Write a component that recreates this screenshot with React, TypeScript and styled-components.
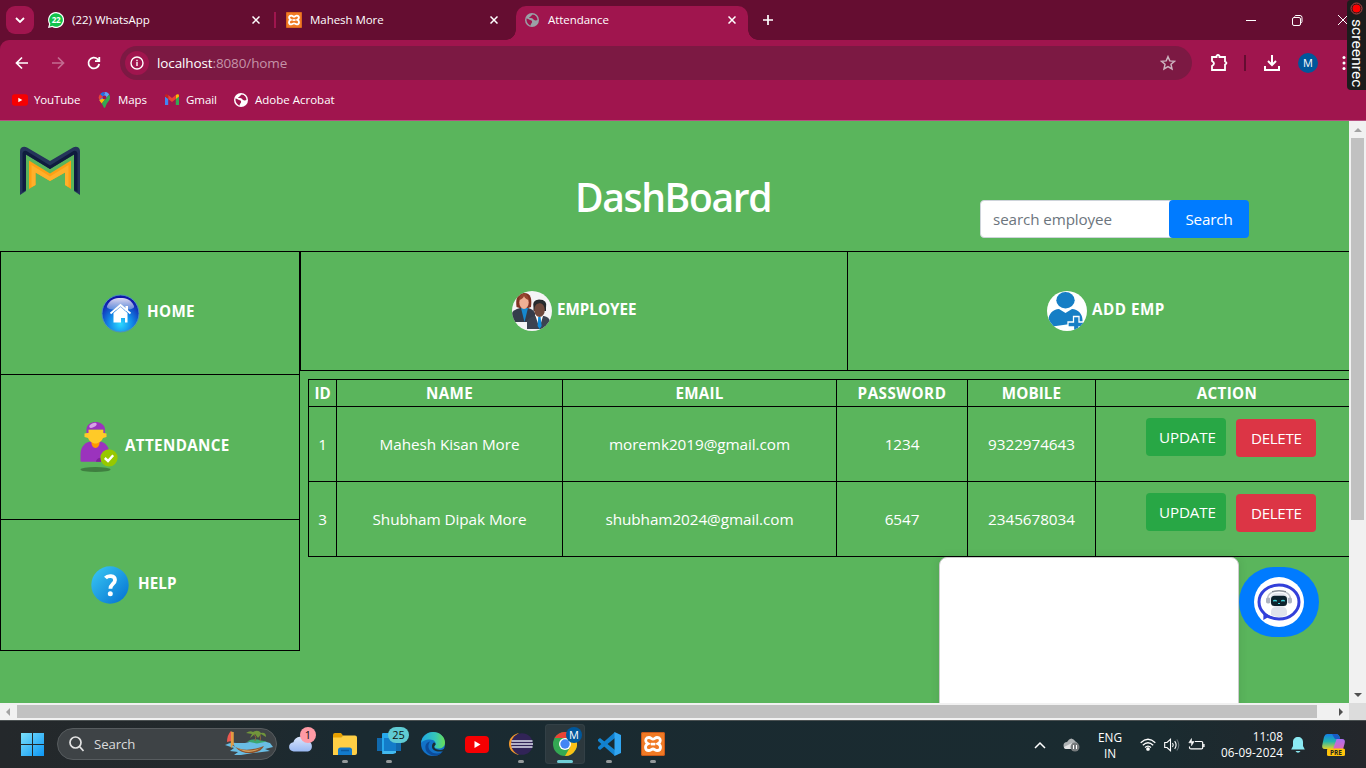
import React from "react";
import styled, { createGlobalStyle } from "styled-components";

const GlobalStyle = createGlobalStyle`
  * { box-sizing: border-box; }
  body { margin: 0; width: 1366px; height: 768px; overflow: hidden; font-family: "Open Sans", "Noto Sans", sans-serif; }
  svg { display: block; flex: none; }
`;

const Screen = styled.div`
  position: relative;
  width: 1366px;
  height: 768px;
  display: flex;
  flex-direction: column;
  overflow: hidden;
`;

/* ---------- browser chrome ---------- */

const TabStrip = styled.div`
  display: flex;
  height: 40px;
  background: #650d31;
  padding-left: 6px;
`;

const TabSearch = styled.div`
  width: 28px;
  height: 28px;
  margin-top: 6px;
  border-radius: 9px;
  background: #a0154e;
  display: flex;
  align-items: center;
  justify-content: center;
`;

const Tab = styled.div<{ $active?: boolean; $width: number; $inset: number; $gap: number; $end?: number }>`
  position: relative;
  display: flex;
  align-items: center;
  width: ${(p) => p.$width}px;
  height: 34px;
  margin-top: 6px;
  margin-left: ${(p) => (p.$active ? 2 : 0)}px;
  padding: 0 ${(p) => p.$end ?? 12}px 6px ${(p) => p.$inset}px;
  gap: ${(p) => p.$gap}px;
  border-radius: 10px 10px 0 0;
  background: ${(p) => (p.$active ? "#a0154e" : "transparent")};
`;

const TabCurve = styled.span<{ $side: "left" | "right" }>`
  position: absolute;
  bottom: 0;
  ${(p) => p.$side}: -10px;
  width: 10px;
  height: 10px;
  background: radial-gradient(circle at ${(p) => (p.$side === "left" ? "0 0" : "100% 0")}, transparent 9.5px, #a0154e 10px);
`;

const TabTitle = styled.span<{ $spacing: number }>`
  flex: 1;
  color: #fff;
  font-size: 11.5px;
  line-height: 16px;
  white-space: nowrap;
  letter-spacing: ${(p) => p.$spacing}px;
`;

const TabDivider = styled.div`
  width: 2px;
  height: 16px;
  margin-top: 12px;
  background: #a0154e;
`;

const WindowButtons = styled.div`
  display: flex;
  align-items: center;
  gap: 35px;
  margin-left: auto;
  padding-right: 18px;
`;

const Toolbar = styled.div`
  display: flex;
  align-items: center;
  height: 46px;
  padding-left: 14px;
  background: #a0154e;
  border-radius: 9px 0 0 0;
`;

const ToolbarBack = styled.div`
  background: #650d31;
`;

const NavButtons = styled.div`
  display: flex;
  gap: 20px;
  width: 106px;
`;

const AddressBar = styled.div`
  display: flex;
  align-items: center;
  width: 1072px;
  height: 34px;
  padding: 0 16px 0 5px;
  border-radius: 17px;
  background: #7c1943;
`;

const SiteInfo = styled.div`
  width: 24px;
  height: 24px;
  border-radius: 50%;
  background: #a0154e;
  display: flex;
  align-items: center;
  justify-content: center;
`;

const Url = styled.span`
  flex: 1;
  margin-left: 8px;
  font-size: 13.5px;
  line-height: 20px;
  letter-spacing: -0.12px;
  color: #c593a8;
`;

const UrlHost = styled.span`
  color: #fff;
`;

const ToolbarActions = styled.div`
  display: flex;
  align-items: center;
  margin-left: 17px;
`;

const ToolbarDivider = styled.div`
  width: 2px;
  height: 16px;
  margin: 0 17px 0 15px;
  background: #650d31;
`;

const Avatar = styled.div`
  width: 20px;
  height: 20px;
  margin: 0 23px 0 17px;
  border-radius: 50%;
  background: #00579b;
  color: #fff;
  font-size: 11px;
  line-height: 20px;
  text-align: center;
`;

const Bookmarks = styled.div`
  display: flex;
  height: 35px;
  padding: 5px 0 0 12px;
  background: #a0154e;
  border-bottom: 1px solid #b75081;
`;

const Bookmark = styled.div<{ $width: number; $spacing: number; $gap: number }>`
  display: flex;
  align-items: center;
  gap: ${(p) => p.$gap}px;
  width: ${(p) => p.$width}px;
  height: 17px;
  white-space: nowrap;
  color: #fff;
  font-size: 11.5px;
  line-height: 16px;
  letter-spacing: ${(p) => p.$spacing}px;
`;

const Recorder = styled.div`
  position: absolute;
  z-index: 2;
  top: 0;
  right: 0;
  width: 19px;
  height: 90px;
  padding-top: 2px;
  border-radius: 4px 0 0 4px;
  background: #1c1c1c;
  display: flex;
  flex-direction: column;
  align-items: center;
`;

const RecorderLabel = styled.span`
  writing-mode: vertical-rl;
  margin-top: 4px;
  width: 19px;
  line-height: 19px;
  color: #fff;
  font-family: Roboto, sans-serif;
  font-size: 15.5px;
  letter-spacing: 0.1px;
  white-space: nowrap;
`;

/* ---------- page ---------- */

const Viewport = styled.div`
  display: grid;
  grid-template-columns: 1349px 17px;
  grid-template-rows: 582px 17px;
`;

const Page = styled.div`
  position: relative;
  overflow: hidden;
  background: #5ab55c;
  color: #fff;
`;

const Header = styled.header`
  display: flex;
  height: 130px;
  padding: 25px 0 0 20px;
`;

const Title = styled.h1`
  width: 405px;
  margin: 23px 0 0 495px;
  font-size: 39px;
  line-height: 56px;
  font-weight: 600;
  letter-spacing: -1.35px;
`;

const SearchForm = styled.div`
  display: flex;
  margin-top: 54px;
  height: 38px;
`;

const SearchField = styled.div`
  width: 195px;
  margin-right: -6px;
  padding-left: 12px;
  border: 1px solid #ced4da;
  border-radius: 4px;
  background: #fff;
  color: #6c757d;
  font-size: 15.2px;
  line-height: 36px;
  letter-spacing: -0.1px;
`;

const PrimaryButton = styled.button`
  width: 80px;
  height: 38px;
  padding: 0;
  border: 0;
  border-radius: 4px;
  background: #007bff;
  color: #fff;
  font-family: inherit;
  font-size: 15.2px;
  line-height: 38px;
  letter-spacing: -0.15px;
  text-align: center;
`;

const Body = styled.div`
  display: grid;
  grid-template-columns: 300px 1066px;
  align-items: start;
`;

const Sidebar = styled.nav`
  border: 1px solid #000;
  border-bottom: 0;
`;

const SideItem = styled.div<{ $height: number; $inset: number; $gap: number }>`
  display: flex;
  align-items: center;
  gap: ${(p) => p.$gap}px;
  height: ${(p) => p.$height}px;
  padding-left: ${(p) => p.$inset}px;
  border-bottom: 1px solid #000;
`;

const NavLabel = styled.span<{ $spacing: number }>`
  padding-bottom: 4px;
  font-size: 15.2px;
  line-height: 20px;
  font-weight: 700;
  white-space: nowrap;
  letter-spacing: ${(p) => p.$spacing}px;
`;

const TopNav = styled.nav`
  display: grid;
  grid-template-columns: 547px 518px;
  height: 120px;
  border: 1px solid #000;
  border-right: 0;
`;

const TopItem = styled.div<{ $inset: number }>`
  display: flex;
  align-items: center;
  gap: 5px;
  padding-left: ${(p) => p.$inset}px;
  border-right: 1px solid #000;
`;

const Table = styled.div`
  width: 1051px;
  margin: 8px 0 0 8px;
  border-top: 1px solid #000;
  border-left: 1px solid #000;
`;

const Row = styled.div<{ $height: number }>`
  display: grid;
  grid-template-columns: 28px 226px 274px 131px 128px 263px;
  grid-template-rows: ${(p) => p.$height}px;
`;

const HeadCell = styled.div<{ $spacing: number }>`
  border-right: 1px solid #000;
  border-bottom: 1px solid #000;
  font-size: 15.2px;
  font-weight: 700;
  line-height: 27px;
  text-align: center;
  letter-spacing: ${(p) => p.$spacing}px;
`;

const Cell = styled.div`
  border-right: 1px solid #000;
  border-bottom: 1px solid #000;
  font-size: 15.3px;
  line-height: 75px;
  text-align: center;
  letter-spacing: -0.07px;
`;

const ActionCell = styled.div`
  display: flex;
  gap: 10px;
  padding: 11px 0 0 50px;
  border-right: 1px solid #000;
  border-bottom: 1px solid #000;
`;

const ActionButton = styled.button<{ $danger?: boolean }>`
  width: 80px;
  height: 38px;
  margin-top: ${(p) => (p.$danger ? 1 : 0)}px;
  padding: 0 0 0 ${(p) => (p.$danger ? 15 : 13)}px;
  border: 0;
  border-radius: 4px;
  background: ${(p) => (p.$danger ? "#dc3545" : "#28a745")};
  color: #fff;
  font-family: inherit;
  font-size: 15.2px;
  line-height: 38px;
  text-align: left;
  letter-spacing: ${(p) => (p.$danger ? -0.35 : -0.15)}px;
`;

const ChatPanel = styled.div`
  position: absolute;
  left: 939px;
  top: 436px;
  width: 300px;
  height: 400px;
  border: 1px solid #ccc;
  border-radius: 8px;
  background: #fff;
  box-shadow: 0 0 10px rgba(0, 0, 0, 0.1);
`;

const ChatButton = styled.div`
  position: absolute;
  left: 1239px;
  top: 446px;
  width: 80px;
  height: 70px;
  border-radius: 35px;
  background: #007bff;
  display: flex;
  align-items: center;
  justify-content: center;
`;

const VScroll = styled.div`
  display: flex;
  flex-direction: column;
  align-items: center;
  background: #f1f1f1;
  padding: 7px 0 6px;
`;

const VThumb = styled.div`
  width: 13px;
  height: 382px;
  margin: 6px 0 auto;
  background: #c1c1c1;
`;

const HScroll = styled.div`
  display: flex;
  align-items: center;
  background: #f1f1f1;
  padding: 0 6px 0 6px;
`;

const HThumb = styled.div`
  width: 1300px;
  height: 13px;
  margin: 0 auto 0 7px;
  background: #c1c1c1;
`;

const ScrollCorner = styled.div`
  background: #dcdcdc;
`;

/* ---------- taskbar ---------- */

const Taskbar = styled.footer`
  display: flex;
  height: 48px;
  padding-left: 21px;
  border-top: 1px solid #4b5152;
  background: linear-gradient(90deg, #24282b 0%, #22292c 14%, #1a2a31 26%, #1a2b30 85%, #20282d 94%, #24272c 100%);
  color: #fff;
`;

const TaskSearch = styled.div`
  display: flex;
  align-items: center;
  width: 220px;
  height: 32px;
  margin: 7px 2px 0 13px;
  padding: 0 3px 0 11px;
  border: 1px solid #575c5f;
  border-radius: 16px;
  background: #3e4346;
`;

const TaskSearchText = styled.span`
  flex: 1;
  margin-left: 10px;
  color: #dadbdc;
  font-size: 13.2px;
  letter-spacing: -0.1px;
`;

const StartButton = styled.div`
  margin-top: 12px;
`;

const TaskApp = styled.div<{ $active?: boolean }>`
  position: relative;
  width: 40px;
  height: 40px;
  margin: 3px 2px 0;
  border-radius: 4px;
  background: ${(p) => (p.$active ? "#2c383d" : "transparent")};
  box-shadow: ${(p) => (p.$active ? "inset 0 0 0 1px #334046" : "none")};
  display: flex;
  align-items: center;
  justify-content: center;
`;

const Running = styled.span<{ $focused?: boolean }>`
  position: absolute;
  bottom: 1px;
  left: ${(p) => (p.$focused ? 12 : 17)}px;
  width: ${(p) => (p.$focused ? 16 : 6)}px;
  height: 3px;
  border-radius: 2px;
  background: ${(p) => (p.$focused ? "#70cfd8" : "#94999b")};
`;

const Badge = styled.span<{ $left: number; $top: number; $width: number; $fill: string; $ink?: string }>`
  position: absolute;
  left: ${(p) => p.$left}px;
  top: ${(p) => p.$top}px;
  width: ${(p) => p.$width}px;
  height: 16px;
  border-radius: 8px;
  background: ${(p) => p.$fill};
  color: ${(p) => p.$ink ?? "#111"};
  font-size: 11px;
  line-height: 16px;
  text-align: center;
`;

const Tray = styled.div`
  display: flex;
  align-items: center;
  margin-left: auto;
  padding-right: 19px;
`;

const Language = styled.div`
  width: 30px;
  margin: 0 15px 0 15px;
  font-size: 11.8px;
  line-height: 16px;
  text-align: center;
  letter-spacing: -0.05px;
`;

const Clock = styled.div`
  width: 72px;
  margin: -2px 8px 0 6px;
  font-size: 11.7px;
  line-height: 16px;
  text-align: right;
  white-space: nowrap;
  letter-spacing: 0.1px;
`;

/* ---------- icons ---------- */

const CloseIcon = () => (
  <svg width="8" height="8" viewBox="0 0 8 8" stroke="#fff" strokeWidth="1.5"><path d="M.5 .5l7 7M7.5 .5l-7 7" /></svg>
);

const WhatsAppIcon = () => (
  <svg width="16" height="16" viewBox="0 0 16 16">
    <path d="M8 0a8 8 0 1 1-3.8 15L0 16l1.100-4A8 8 0 0 1 8 0z" fill="#fff" />
    <path d="M8 1.200a6.800 6.800 0 1 1-3.500 12.600l-2.900.8.800-2.800A6.800 6.800 0 0 1 8 1.200z" fill="#12c24b" />
    <text x="8" y="10.900" fontSize="8" fontWeight="700" fill="#fff" textAnchor="middle" letterSpacing="-.4">22</text>
  </svg>
);

const XamppIcon = ({ size }: { size: number }) => (
  <svg width={size} height={size} viewBox="0 0 24 24">
    <rect width="24" height="24" rx="2" fill="#f17a24" />
    <rect x=".5" y=".5" width="23" height="23" rx="1.500" fill="none" stroke="#c9591b" />
    <path d="M8 5.500c-3 0-3.800 2.300-3 4.200.4 1 1.200 1.500 2 2-1.500.6-2.500 1.800-2.500 3.500 0 2.200 1.500 3.300 3.300 3.300 1.900 0 2.700-1.500 4.200-1.500s2.300 1.500 4.200 1.500c1.800 0 3.300-1.100 3.300-3.300 0-1.700-1-2.900-2.500-3.500.8-.5 1.600-1 2-2 .8-1.900 0-4.200-3-4.200-1.800 0-2.500 1.700-4 1.700s-2.200-1.700-4-1.700z" fill="none" stroke="#fff" strokeWidth="2.800" />
    <path d="M9.800 12.100h4.400" stroke="#fff" strokeWidth="2.600" />
  </svg>
);

const GlobeIcon = ({ size, fill, land }: { size: number; fill: string; land: string }) => (
  <svg width={size} height={size} viewBox="0 0 14 14">
    <circle cx="7" cy="7" r="7" fill={fill} />
    <path d="M1.500 5.500c1.500.2 3 1.500 3.600 1.600 1 .1 2 .7 2 1.900 0 1.500-1.500 1.300-1.500 3.500-2.600-.7-4.400-3.600-4.100-7zM7.600 1.500c-.4 1-1.500.8-1.800 1.700-.4 1.100-2 .8-1.700 1.900 1.600 0 3.400-.2 4 1 .5 1.200 2.500 1.600 4.300 1C12.600 4.200 10.500 1.800 7.600 1.500z" fill={land} />
  </svg>
);

const YouTubeIcon = ({ width, height }: { width: number; height: number }) => (
  <svg width={width} height={height} viewBox="0 0 24 17">
    <rect width="24" height="17" rx="4" fill="#f60002" />
    <path d="M9.500 5l6 3.500-6 3.500z" fill="#fff" />
  </svg>
);

const MapsIcon = () => (
  <svg width="13" height="16" viewBox="0 0 13 16">
    <path d="M6.500 0a5.800 5.800 0 0 1 4.600 2.300L4.800 9.700 3 9.800 1.300 8 7 1z" fill="#4285f4" />
    <path d="M6.500 0A5.800 5.800 0 0 0 2 2.200L5 5z" fill="#1a73e8" />
    <path d="M1.300 8C2 9.500 3 10.500 3.800 11.600L9 5z" fill="#fbbc04" />
    <path d="M2 2.200A5.600 5.600 0 0 0 1.300 8L5 4.700z" fill="#ea4335" />
    <path d="M11.100 2.300C13.600 6.500 10.600 9 9 11.300 7.900 13 7.500 16 6.500 16S5 13.300 3.800 11.600z" fill="#34a853" />
    <path d="M6.500 0a5.800 5.800 0 0 1 4.600 2.300L8 6z" fill="#5fa0f5" />
    <circle cx="6.500" cy="5.600" r="2" fill="#a0154e" />
  </svg>
);

const GmailIcon = () => (
  <svg width="14" height="11" viewBox="0 0 14 11">
    <path d="M0 2.500V11h3.200V4.500z" fill="#4285f4" />
    <path d="M14 2.500V11h-3.200V4.500z" fill="#34a853" />
    <path d="M10.800 1v4L14 2.600V1.500C14 0 12.200-.4 10.800 1z" fill="#fbbc04" />
    <path d="M3.200 1L7 3.900 10.800 1v4L7 7.900 3.200 5z" fill="#ea4335" />
    <path d="M0 2.600L3.200 5V1C1.800-.4 0 0 0 1.500z" fill="#c5221f" />
  </svg>
);

const LogoM = () => (
  <svg width="60" height="49" viewBox="0 0 60 49">
    <path d="M0 49V5C0 1 4 0 7 1.500L30 15 53 1.500C56 0 60 1 60 5v44l-6-4V8.500L30 23 6 8.500V45z" fill="#24355a" />
    <path d="M2.500 46V7q1-3 4-2L30 19.500 53.500 5q3-1 4 2v39L54 44V8.500L30 23 6 8.500V44z" fill="#0f1c3e" />
    <path d="M9 14.500l21 13 21-13V43l-6-4V26.500L30 35 15.500 26.500V39L9 43z" fill="#ff9f14" />
    <path d="M11.500 19L30 30.500 48.500 19v22L45 39V26.500L30 35 15.500 26.500V39l-4 2z" fill="#ffb02b" />
  </svg>
);

const HomeBall = () => (
  <svg width="39" height="39" viewBox="0 0 39 39">
    <defs>
      <radialGradient id="ball" cx="50%" cy="78%" r="70%">
        <stop offset="0" stopColor="#2cd9ff" /><stop offset=".45" stopColor="#1188e8" /><stop offset="1" stopColor="#1016a8" />
      </radialGradient>
      <linearGradient id="gloss" x1="0" y1="0" x2="0" y2="1">
        <stop offset="0" stopColor="#fff" stopOpacity=".85" /><stop offset="1" stopColor="#fff" stopOpacity=".3" />
      </linearGradient>
    </defs>
    <circle cx="19.500" cy="19.500" r="18.500" fill="url(#ball)" stroke="#4c93bc" />
    <path d="M6 12C9 5.500 14 4 19.500 4S30 5.500 33 12c1 3-5 4-13.500 4S5 15 6 12z" fill="url(#gloss)" />
    <path d="M9.500 19.500l10-8.500 10 8.500" fill="none" stroke="#fff" strokeWidth="1.800" />
    <path d="M24.500 12h2.500v5h-2.500zM12.500 19l7-6 7 6v9.500H24V24h-4v4.500h-7.500z" fill="#fff" />
  </svg>
);

const PersonCheck = () => (
  <svg width="38" height="52" viewBox="0 0 38 52">
    <ellipse cx="15.500" cy="48.500" rx="15" ry="2.500" fill="#3f7f40" />
    <path d="M.5 40V33c0-8 6-12.500 11-12.500h8c5 0 10 5 10 12.500v7q0 .8-1 .8h-27q-1 0-1-.8z" fill="#9b33bd" />
    <path d="M16 40.800c0-2 2-4 5-4v4z" fill="#7d2299" />
    <path d="M11.500 16h8v6c0 2-1.500 5-4 5s-4-3-4-5z" fill="#ff9900" />
    <path d="M7.500 8.500h16v3.500l3 .5v3.500l-3.500 1c-1 3-4.500 5.500-7.500 5.500s-6.500-2.500-7.500-5.500l-3.500-1v-3.500l3-.5z" fill="#ffca28" />
    <path d="M6.500 12V8.500C6.500 3.500 11 1 15.500 1s9.500 2.500 9.500 7.500V12h-1.500V8.500h-15V12z" fill="#9b33bd" />
    <ellipse cx="13" cy="4.300" rx="4" ry="1.900" fill="#d6a3e5" transform="rotate(-28 13 4.300)" />
    <circle cx="29" cy="36.800" r="8.600" fill="#97c800" />
    <path d="M24.800 37l3.200 3 5.200-5.800" fill="none" stroke="#fff" strokeWidth="2.400" />
  </svg>
);

const HelpBall = () => (
  <svg width="38" height="38" viewBox="0 0 38 38">
    <defs>
      <linearGradient id="help" x1="0" y1="0" x2="1" y2="1">
        <stop offset="0.100" stopColor="#35c1f1" /><stop offset=".9" stopColor="#0878d4" />
      </linearGradient>
    </defs>
    <circle cx="19" cy="19" r="18.700" fill="url(#help)" />
    <path d="M14.500 12c2-2.500 9.500-3 9.500 2 0 4-4.600 4-4.600 8.800" fill="none" stroke="#fff" strokeWidth="3.800" />
    <circle cx="19.300" cy="27.800" r="2.500" fill="#fff" />
  </svg>
);

const EmployeesIcon = () => (
  <svg width="40" height="40" viewBox="0 0 40 40">
    <defs><clipPath id="disc"><circle cx="20" cy="20" r="20" /></clipPath></defs>
    <g clipPath="url(#disc)">
      <rect width="40" height="40" fill="#f5f4f6" />
      <path d="M4.500 16C3.500 8 5 2 12 2s8 6 7 14q-7 3-14.500 0z" fill="#803222" />
      <path d="M0 31V22q1-3 8-5h8q5 1 7 5v9z" fill="#343c4b" />
      <path d="M9 17h7l-3.500 14z" fill="#1688cf" />
      <ellipse cx="12" cy="11.500" rx="4.700" ry="6.500" fill="#f0b095" />
      <path d="M7 9q4-1 5-4 1 3 5 4-1-6-5-6.500T7 9z" fill="#96452f" />
      <path d="M15 38V30q1-3 8-5h9q5 1 6 5v8z" fill="#3b4351" />
      <path d="M23.500 25h7.500L27.500 37z" fill="#fff" /><path d="M26.200 26h2.400l1 9-2 3-2-3z" fill="#118ddb" />
      <path d="M21.500 17q-2-8 5.500-8.500 9 0 7 8.500v3H21.500z" fill="#25282b" />
      <ellipse cx="27.500" cy="19" rx="5.300" ry="7" fill="#70493d" />
      <path d="M22 14q7-4 11 0l-1-4h-9z" fill="#292c2f" />
    </g>
  </svg>
);

const AddEmployeeIcon = () => (
  <svg width="40" height="40" viewBox="0 0 40 40">
    <defs><clipPath id="disc2"><circle cx="20" cy="20" r="20" /></clipPath></defs>
    <g clipPath="url(#disc2)">
      <rect width="40" height="40" fill="#fff" />
      <ellipse cx="18.500" cy="9.300" rx="9.200" ry="8.200" fill="#167ec5" />
      <path d="M1.500 34v-5c0-6 4.500-11 10.500-11l6.500 4 6.500-4c6 0 10.500 5 10.500 11v4q-14-.5-26.500 2-5 .5-7.500-1z" fill="#167ec5" />
      <path d="M26.500 25.500h5.500v5.500h5.500v5h-5.500v5h-5.500v-5H21v-5h5.500z" fill="#167ec5" stroke="#fff" strokeWidth="1.300" />
    </g>
  </svg>
);

const BotIcon = () => (
  <svg width="50" height="50" viewBox="0 0 50 50">
    <circle cx="25" cy="25" r="25" fill="#fff" />
    <ellipse cx="25" cy="25" rx="20" ry="17" fill="none" stroke="#3340da" strokeWidth="3" />
    <path d="M9.500 35.500l-.2 7.500 7-4z" fill="#3340da" />
    <path d="M13.500 22c0-11 23-11 23 0" fill="none" stroke="#c0c4cc" strokeWidth="1.400" />
    <path d="M18 14.500q7-1.500 14 0" fill="none" stroke="#7d828a" strokeWidth="1" />
    <rect x="12" y="20.500" width="4.500" height="6" rx="1.800" fill="#aeb4c0" /><rect x="33.500" y="20.500" width="4.500" height="6" rx="1.800" fill="#aeb4c0" />
    <rect x="16" y="16" width="18" height="14" rx="6" fill="#e6e8ef" />
    <rect x="17" y="18.700" width="16" height="10.200" rx="3.500" fill="#0d222c" />
    <path d="M19 24q2-2 4 0zM27 24q2-2 4 0z" fill="#46dee4" stroke="#46dee4" strokeWidth=".6" />
    <path d="M24 26.500h2" stroke="#46dee4" />
    <path d="M17 38v-3q0-5 5-5h6q5 0 5 5v3q-8 4-16 0z" fill="#dfe2eb" />
  </svg>
);

const BoatIcon = () => (
  <svg width="48" height="28" viewBox="0 0 48 28">
    <path d="M0 15q6-3 11-2l9 0q15-4 25 0l3 4-8 2 5 2-17 2-12 2H9l4-3-8-1 4-3z" fill="#69bde4" />
    <path d="M22 11.500q7-4 14-1l6 1-10 2z" fill="#3ba66f" />
    <path d="M30 11q2-4-1-7M35 11q1-3 0-6" stroke="#8d633c" fill="none" />
    <path d="M21 3q4-3 7-1 5-3 8 1 5-1 5 4l-5-3-3 4-3-4-5 4 2-4z" fill="#71953b" />
    <path d="M7 4v11q12 9 32 1-4 8-18 7-9-2-13-9z" fill="#8c512b" />
    <path d="M10 17q15 7 27 0-9 7-19 4z" fill="#d0a05e" />
    <path d="M6.500 1.500v16M8 2v13" stroke="#e39b42" strokeWidth="1.500" />
    <path d="M6 1Q2 5 2 12l4-1z" fill="#ec5850" />
  </svg>
);

const WeatherIcon = () => (
  <svg width="26" height="22" viewBox="0 0 26 22">
    <defs><linearGradient id="cloud" x1="0" y1="0" x2="0" y2="1"><stop offset="0" stopColor="#dbe7fd" /><stop offset="1" stopColor="#99b8f2" /></linearGradient></defs>
    <path d="M6 18.500a4.600 4.600 0 0 1-.6-9.200A7.500 7.500 0 0 1 19.500 8 5.400 5.400 0 0 1 20 18.500z" fill="url(#cloud)" />
  </svg>
);

const FolderIcon = () => (
  <svg width="24" height="22" viewBox="0 0 24 22">
    <path d="M0 2q0-2 2-2h6l2 2.500L8 5H0z" fill="#e7a000" /><path d="M0 4.500h8l2-2h12q2 0 2 2V20q0 2-2 2H0z" fill="#ffcf45" />
    <path d="M5 22v-5q0-2.500 2.500-2.500h9q2.500 0 2.500 2.500v5z" fill="#127acb" /><path d="M8 17.500h8" stroke="#0c5a9e" strokeWidth="1.500" />
  </svg>
);

const PhoneLinkIcon = () => (
  <svg width="26" height="24" viewBox="0 0 26 24">
    <rect x="1" y="6" width="24" height="13" fill="#1069ad" /><rect x="6" y="1" width="11" height="20" rx="1" fill="#27a9ec" />
    <rect x="8" y="6" width="12" height="13" fill="#137cc9" /><path d="M7 19h13v2l-3 1H6z" fill="#42b9ef" />
  </svg>
);

const EdgeIcon = () => (
  <svg width="24" height="24" viewBox="0 0 24 24">
    <defs><linearGradient id="edge" x1="0" y1="0" x2="1" y2="0"><stop offset="0" stopColor="#1fa7e4" /><stop offset=".6" stopColor="#36c7b8" /><stop offset="1" stopColor="#69df54" /></linearGradient></defs>
    <circle cx="12" cy="12" r="12" fill="#1272c8" />
    <path d="M0 11C1 4 6 0 12 0c7 0 12 5 12 10.500 0 4-3 6-6.500 6-3 0-5-1-3.500-3 2-3-1-6-5-6-5 0-8 2-9 3.500z" fill="url(#edge)" />
    <path d="M9 9.500c-4 6 0 12 7 12 3 0 5-1 6.500-3-4 7-13 6.500-17 1C3 15 5 10 9 9.500z" fill="#0c4b9a" />
    <path d="M13.800 13.500c-2 2 1 4.500 4.500 4.500 2.300 0 4-.4 6-2l-1.500 3C17 20.500 11 19 11 14.500c0-2 .8-3.500 2-4 2 .8 2 2 .8 3z" fill="#1b2c33" />
  </svg>
);

const EclipseIcon = () => (
  <svg width="24" height="24" viewBox="0 0 24 24">
    <path d="M10 1C3 3 0 7 0 12s3 9 10 11C6 20 4 17 4 12s2-8 6-11z" fill="#f59a2c" />
    <circle cx="13" cy="12" r="10.800" fill="#312457" />
    <path d="M2.500 9h21M2 12h22M2.500 15h21" stroke="#dedfee" strokeWidth="1.600" />
  </svg>
);

const ChromeIcon = () => (
  <svg width="24" height="24" viewBox="0 0 24 24">
    <circle cx="12" cy="12" r="12" fill="#34a853" />
    <path d="M12 12L1.600 6A12 12 0 0 1 22.400 6H12z" fill="#ea4335" />
    <path d="M22.400 6A12 12 0 0 1 12 24l5.200-9L12 6z" fill="#fbc116" />
    <path d="M1.600 6l5.200 9 5.200-9z" fill="#34a853" />
    <circle cx="12" cy="12" r="6" fill="#fff" /><circle cx="12" cy="12" r="4.700" fill="#4285f4" />
  </svg>
);

const VsCodeIcon = () => (
  <svg width="24" height="24" viewBox="0 0 24 24">
    <path d="M1 7.500l2-1.500L18 18v6L1 9z" fill="#1485d2" /><path d="M1 16.500L3 18 18 6V0L1 15z" fill="#1180cf" />
    <path d="M17.500 0L24 3v18l-6.500 3z" fill="#31a6f2" />
  </svg>
);

const CopilotIcon = () => (
  <svg width="26" height="24" viewBox="0 0 26 24">
    <defs>
      <linearGradient id="cpA" x1="0" y1="0" x2="0" y2="1"><stop offset="0" stopColor="#147ee5" /><stop offset=".5" stopColor="#23b5ad" /><stop offset="1" stopColor="#dfd32b" /></linearGradient>
      <linearGradient id="cpB" x1="0" y1="0" x2="0" y2="1"><stop offset="0" stopColor="#a96ff2" /><stop offset="1" stopColor="#f8649c" /></linearGradient>
    </defs>
    <path d="M14 6h7q4 0 2.500 5l-2 7q-1 3-5 3H9z" fill="url(#cpB)" />
    <path d="M6 1h9q3 0 4 4h-3l-4 11H4Q0 16 1.500 11L3 4q1-3 3-3z" fill="url(#cpA)" />
    <path d="M11 1h4q3 0 4 5h-5z" fill="#195bc6" />
    <rect x="6" y="15.500" width="18" height="7.500" rx="1.500" fill="#ffc40c" />
    <text x="15" y="21.700" fontSize="6.500" fontWeight="700" fill="#222" textAnchor="middle">PRE</text>
  </svg>
);

const columns = [
  { label: "ID", spacing: -0.1 },
  { label: "NAME", spacing: 0.35 },
  { label: "EMAIL", spacing: 0.2 },
  { label: "PASSWORD", spacing: 0.5 },
  { label: "MOBILE", spacing: 0.1 },
  { label: "ACTION", spacing: 0.35 },
];

const employees = [
  { id: 1, name: "Mahesh Kisan More", email: "moremk2019@gmail.com", password: "1234", mobile: "9322974643" },
  { id: 3, name: "Shubham Dipak More", email: "shubham2024@gmail.com", password: "6547", mobile: "2345678034" },
];

function BrowserChrome() {
  return (
    <>
      <TabStrip>
        <TabSearch>
          <svg width="10" height="6" viewBox="0 0 10 6" fill="none" stroke="#fff" strokeWidth="1.800"><path d="M1 1l4 4 4-4" /></svg>
        </TabSearch>
        <Tab $width={240} $inset={14} $gap={8} $end={14}><WhatsAppIcon /><TabTitle $spacing={0}>(22) WhatsApp</TabTitle><CloseIcon /></Tab>
        <TabDivider />
        <Tab $width={238} $inset={10} $gap={8} $end={16}><XamppIcon size={16} /><TabTitle $spacing={-0.05}>Mahesh More</TabTitle><CloseIcon /></Tab>
        <Tab $active $width={232} $inset={9} $gap={9}>
          <TabCurve $side="left" /><GlobeIcon size={14} fill="#9aa0a6" land="#a0154e" /><TabTitle $spacing={-0.05}>Attendance</TabTitle><CloseIcon /><TabCurve $side="right" />
        </Tab>
        <svg width="40" height="40" viewBox="0 0 40 40" stroke="#fff" strokeWidth="1.700"><path d="M15 20h10M20 15v10" /></svg>
        <WindowButtons>
          <svg width="10" height="10" viewBox="0 0 10 10" stroke="#fff"><path d="M0 5.500h10" /></svg>
          <svg width="12" height="11" viewBox="0 0 12 11" fill="none" stroke="#fff"><rect x="1.500" y="2.500" width="8" height="8" rx="1.500" /><path d="M3.500 1.500Q4 .5 5 .5h4q2 0 2 2v4q0 1-1 1.500" /></svg>
          <svg width="10" height="10" viewBox="0 0 10 10" stroke="#fff"><path d="M0 0l10 10M10 0L0 10" /></svg>
        </WindowButtons>
      </TabStrip>
      <ToolbarBack>
        <Toolbar>
          <NavButtons>
            <svg width="16" height="16" viewBox="0 0 16 16" fill="none" stroke="#fff" strokeWidth="1.700"><path d="M14 8H3M8 2.500L2.500 8 8 13.500" /></svg>
            <svg width="16" height="16" viewBox="0 0 16 16" fill="none" stroke="#c36c91" strokeWidth="1.700"><path d="M2 8h11M8 2.500L13.500 8 8 13.500" /></svg>
            <svg width="16" height="16" viewBox="0 0 16 16" fill="none" stroke="#fff" strokeWidth="1.800"><path d="M13.200 9A5.400 5.400 0 1 1 11.600 4.100L13 5.500M13.300 2v4.200H9" /></svg>
          </NavButtons>
          <AddressBar>
            <SiteInfo><svg width="14" height="14" viewBox="0 0 14 14" fill="none" stroke="#fff" strokeWidth="1.400"><circle cx="7" cy="7" r="6" /><path d="M7 6v4M7 3.700v1.500" /></svg></SiteInfo>
            <Url><UrlHost>localhost</UrlHost>:8080/home</Url>
            <svg width="16" height="16" viewBox="0 0 16 16" fill="none" stroke="#ccb4bf" strokeWidth="1.500"><path d="M8 1.700l1.800 4.200 4.700.4-3.500 3 1 4.600L8 11.500l-4 2.400 1-4.600-3.500-3 4.700-.4z" /></svg>
          </AddressBar>
          <ToolbarActions>
            <svg width="20" height="20" viewBox="0 0 20 20" fill="none" stroke="#fff" strokeWidth="1.800"><path d="M3 4h4.500V3q1.500-2 3 0v1H16v4.500q3 1.500 0 3V17H3v-4q4-2.500 0-5z" /></svg>
            <ToolbarDivider />
            <svg width="18" height="18" viewBox="0 0 18 18" fill="none" stroke="#fff" strokeWidth="2"><path d="M9 1v10M5 7l4 4 4-4M2 12v4h14v-4" /></svg>
            <Avatar>M</Avatar>
            <svg width="6" height="16" viewBox="0 0 6 16" fill="#fff"><circle cx="3" cy="2.500" r="1.500" /><circle cx="3" cy="8" r="1.500" /><circle cx="3" cy="13.500" r="1.500" /></svg>
          </ToolbarActions>
        </Toolbar>
      </ToolbarBack>
      <Bookmarks>
        <Bookmark $width={86} $spacing={-0.15} $gap={6}><YouTubeIcon width={16} height={12} />YouTube</Bookmark>
        <Bookmark $width={67} $spacing={-0.1} $gap={7}><MapsIcon />Maps</Bookmark>
        <Bookmark $width={69} $spacing={-0.05} $gap={7}><GmailIcon />Gmail</Bookmark>
        <Bookmark $width={110} $spacing={0} $gap={7}><GlobeIcon size={14} fill="#fff" land="#a0154e" />Adobe Acrobat</Bookmark>
      </Bookmarks>
      <Recorder>
        <svg width="13" height="13" viewBox="0 0 13 13"><circle cx="6.500" cy="6.500" r="5.500" fill="none" stroke="#b44" /><circle cx="6.500" cy="6.500" r="4" fill="#f00" /></svg>
        <RecorderLabel>screenrec</RecorderLabel>
      </Recorder>
    </>
  );
}

function Dashboard() {
  return (
    <Page>
      <Header>
        <LogoM />
        <Title>DashBoard</Title>
        <SearchForm><SearchField>search employee</SearchField><PrimaryButton>Search</PrimaryButton></SearchForm>
      </Header>
      <Body>
        <Sidebar>
          <SideItem $height={123} $inset={100} $gap={7}><HomeBall /><NavLabel $spacing={0.35}>HOME</NavLabel></SideItem>
          <SideItem $height={145} $inset={79} $gap={7}><PersonCheck /><NavLabel $spacing={0.35}>ATTENDANCE</NavLabel></SideItem>
          <SideItem $height={131} $inset={90} $gap={9}><HelpBall /><NavLabel $spacing={0.1}>HELP</NavLabel></SideItem>
        </Sidebar>
        <main>
          <TopNav>
            <TopItem $inset={211}><EmployeesIcon /><NavLabel $spacing={0}>EMPLOYEE</NavLabel></TopItem>
            <TopItem $inset={199}><AddEmployeeIcon /><NavLabel $spacing={0.5}>ADD EMP</NavLabel></TopItem>
          </TopNav>
          <Table>
            <Row $height={27}>
              {columns.map((c) => <HeadCell key={c.label} $spacing={c.spacing}>{c.label}</HeadCell>)}
            </Row>
            {employees.map((e) => (
              <Row key={e.id} $height={75}>
                <Cell>{e.id}</Cell>
                <Cell>{e.name}</Cell>
                <Cell>{e.email}</Cell>
                <Cell>{e.password}</Cell>
                <Cell>{e.mobile}</Cell>
                <ActionCell><ActionButton>UPDATE</ActionButton><ActionButton $danger>DELETE</ActionButton></ActionCell>
              </Row>
            ))}
          </Table>
        </main>
      </Body>
      <ChatPanel />
      <ChatButton><BotIcon /></ChatButton>
    </Page>
  );
}

function WindowsTaskbar() {
  return (
    <Taskbar>
      <StartButton>
        <svg width="23" height="23" viewBox="0 0 23 23">
          <defs><linearGradient id="win" x1="0" y1="0" x2="1" y2="1"><stop offset="0" stopColor="#7be0fb" /><stop offset="1" stopColor="#0c96f5" /></linearGradient></defs>
          <path d="M0 0h11v11H0zM12 0h11v11H12zM0 12h11v11H0zM12 12h11v11H12z" fill="url(#win)" />
        </svg>
      </StartButton>
      <TaskSearch>
        <svg width="15" height="16" viewBox="0 0 15 16" fill="none" stroke="#e4e4e4" strokeWidth="1.700"><circle cx="6.500" cy="6.500" r="5.500" /><path d="M10.500 10.500l4 4.500" /></svg>
        <TaskSearchText>Search</TaskSearchText>
        <BoatIcon />
      </TaskSearch>
      <TaskApp><WeatherIcon /><Badge $left={19} $top={3} $width={16} $fill="#ff9aa5">1</Badge></TaskApp>
      <TaskApp><FolderIcon /><Running /></TaskApp>
      <TaskApp><PhoneLinkIcon /><Badge $left={19} $top={3} $width={21} $fill="#5fcbd3">25</Badge><Running /></TaskApp>
      <TaskApp><EdgeIcon /></TaskApp>
      <TaskApp><YouTubeIcon width={24} height={17} /></TaskApp>
      <TaskApp><EclipseIcon /><Running /></TaskApp>
      <TaskApp $active><ChromeIcon /><Badge $left={21} $top={3} $width={16} $fill="#00579b" $ink="#fff">M</Badge><Running $focused /></TaskApp>
      <TaskApp><VsCodeIcon /><Running /></TaskApp>
      <TaskApp><XamppIcon size={24} /><Running /></TaskApp>
      <Tray>
        <svg width="12" height="8" viewBox="0 0 12 8" fill="none" stroke="#fff" strokeWidth="1.500"><path d="M1 7l5-5 5 5" /></svg>
        <svg width="17" height="14" viewBox="0 0 17 14" style={{ marginLeft: 17 }}><path d="M4 11a3.500 3.500 0 0 1 0-7Q8-3 13 4q3 1 2 7z" fill="#aeb2b4" /><path d="M1 9l8-4 3 6H4q-3 0-3-2z" fill="#e2e3e4" /><circle cx="12" cy="9" r="4.500" fill="#777b7d" /><path d="M10.500 7v4M13.500 7v4" stroke="#fff" /></svg>
        <Language>ENG<br />IN</Language>
        <svg width="16" height="13" viewBox="0 0 16 13" fill="none" stroke="#fff" strokeWidth="1.300"><path d="M.7 4.800Q8-2.200 15.300 4.800M2.800 7.200Q8 2.200 13.200 7.200M5 9.500q3-2.700 6 0" /><circle cx="8" cy="11" r="1.200" fill="#fff" /></svg>
        <svg width="16" height="14" viewBox="0 0 16 14" fill="none" stroke="#fff" strokeWidth="1.100" style={{ marginLeft: 8 }}><path d="M.7 4.500H3L6.500 1.300v11.400L3 9.500H.7zM8.500 5q1.500 2 0 4M10.700 3.200q2.800 3.800 0 7.600" /><path d="M12.800 1.500q4 5.500 0 11" stroke="#667177" /></svg>
        <svg width="17" height="14" viewBox="0 0 17 14" fill="none" stroke="#fff" strokeWidth="1.200" style={{ marginLeft: 8 }}><path d="M7 3.500h6.500q1.200 0 1.200 1.200v5q0 1.200-1.200 1.200H3q-1.500 0-1.500-1.500V8.500M16 6v3" /><path d="M3.500.5L.8 4.800h2.700v3L6.200 3.500H3.500z" fill="#fff" strokeWidth=".5" /></svg>
        <Clock>11:08<br />06-09-2024</Clock>
        <svg width="14" height="16" viewBox="0 0 14 16" fill="#8be9f2"><path d="M7 0c3 0 5 2 5 5v4l1.800 3.500H.2L2 9V5c0-3 2-5 5-5zM4.500 14h5Q8.500 15.800 7 15.800T4.500 14z" /></svg>
        <svg width="16" height="1" viewBox="0 0 16 1" />
        <CopilotIcon />
      </Tray>
    </Taskbar>
  );
}

export default function App() {
  return (
    <Screen>
      <GlobalStyle />
      <BrowserChrome />
      <Viewport>
        <Dashboard />
        <VScroll>
          <svg width="8" height="4" viewBox="0 0 8 4"><path d="M0 4l4-4 4 4z" fill="#a3a3a3" /></svg>
          <VThumb />
          <svg width="8" height="4" viewBox="0 0 8 4"><path d="M0 0l4 4 4-4z" fill="#505050" /></svg>
        </VScroll>
        <HScroll>
          <svg width="4" height="8" viewBox="0 0 4 8"><path d="M4 0L0 4l4 4z" fill="#a3a3a3" /></svg>
          <HThumb />
          <svg width="4" height="8" viewBox="0 0 4 8"><path d="M0 0l4 4-4 4z" fill="#505050" /></svg>
        </HScroll>
        <ScrollCorner />
      </Viewport>
      <WindowsTaskbar />
    </Screen>
  );
}
